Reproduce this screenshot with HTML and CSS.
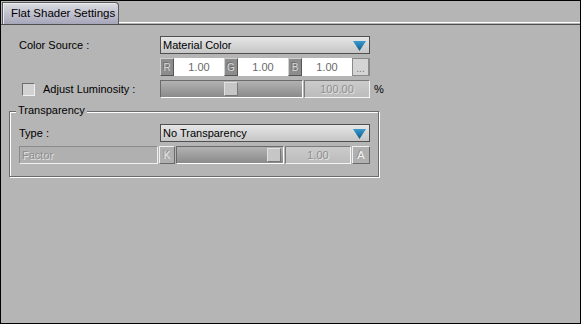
FILE: index.html
```html
<!DOCTYPE html>
<html>
<head>
<meta charset="utf-8">
<link rel="stylesheet" href="styles.css">
</head>
<body>
<div class="window">
  <div class="tabstrip">
    <div class="tab">Flat Shader Settings</div>
    <div class="tabfill"></div>
  </div>
  <div class="content">
    <div class="row first">
      <div class="label">Color Source :</div>
      <div class="dropdown"><span>Material Color</span><svg class="arrow" width="13" height="10" viewBox="0 0 13 10"><defs><linearGradient id="ag" x1="0" y1="0" x2="0" y2="1"><stop offset="0" stop-color="#3a9ad0"/><stop offset="1" stop-color="#0c5a88"/></linearGradient></defs><polygon points="0,0 13,0 6.5,10" fill="url(#ag)"/></svg></div>
    </div>
    <div class="row">
      <div class="label"></div>
      <div class="rgb">
        <span class="chan">R</span><span class="val">1.00</span>
        <span class="chan">G</span><span class="val">1.00</span>
        <span class="chan">B</span><span class="val">1.00</span>
        <span class="dots">...</span>
      </div>
    </div>
    <div class="row">
      <div class="label check-label"><span class="checkbox"></span>Adjust Luminosity :</div>
      <div class="slider lum"><span class="thumb" style="left:63px"></span></div>
      <div class="numbox lumval">100.00</div>
      <span class="pct">%</span>
    </div>
    <div class="group">
      <span class="legend">Transparency</span>
      <div class="row">
        <div class="label">Type :</div>
        <div class="dropdown"><span>No Transparency</span><svg class="arrow" width="13" height="10" viewBox="0 0 13 10"><defs><linearGradient id="ag2" x1="0" y1="0" x2="0" y2="1"><stop offset="0" stop-color="#3a9ad0"/><stop offset="1" stop-color="#0c5a88"/></linearGradient></defs><polygon points="0,0 13,0 6.5,10" fill="url(#ag2)"/></svg></div>
      </div>
      <div class="row factor-row">
        <div class="factor">Factor</div>
        <span class="chan dis">K</span>
        <div class="slider fslider"><span class="thumb" style="left:90px"></span></div>
        <div class="numbox fval">1.00</div>
        <span class="abtn">A</span>
      </div>
    </div>
  </div>
</div>
</body>
</html>
```
FILE: styles.css
```css
* { box-sizing: border-box; }
html, body { margin: 0; padding: 0; }
body {
  font-family: "Liberation Sans", Arial, sans-serif;
  font-size: 11px;
  color: #000;
  background: #b5b5b5;
}
.window {
  width: 581px;
  height: 324px;
  border: 1px solid #000;
  background: #b5b5b5;
}
.tabstrip {
  display: flex;
  height: 24px;
  border-bottom: 1px solid #4e4e4e;
}
.tab {
  margin-top: 1px;
  margin-left: 1px;
  width: 117px;
  height: 22px;
  padding-left: 8px;
  padding-top: 4px;
  border: 1px solid #5a5a5a;
  border-bottom: none;
  border-top-right-radius: 4px;
  background: linear-gradient(#dcdce2, #a6a6ba);
  box-shadow: inset 1px 1px 0 #eeeef2;
  font-size: 11.5px;
}
.tabfill {
  flex: 1;
  height: 22px;
  border-bottom: 1px solid #fff;
}
.content {
  padding: 11px 0 0 8px;
}
.row {
  display: flex;
  align-items: center;
  height: 18px;
  margin-top: 4px;
  padding-left: 10px;
}
.row.first { margin-top: 0; }
.label {
  width: 141px;
  flex: none;
}
.check-label {
  display: flex;
  align-items: center;
}
.checkbox {
  width: 13px;
  height: 13px;
  margin-left: 3px;
  margin-right: 8px;
  background: #d2d2d2;
  border: 1px solid;
  border-color: #6e6e6e #f0f0f0 #f0f0f0 #6e6e6e;
}
.dropdown {
  width: 210px;
  height: 18px;
  border: 1px solid #505050;
  background: linear-gradient(#e6e6e6, #c6c6c6);
  display: flex;
  align-items: center;
  justify-content: space-between;
  padding: 0 2px 0 2px;
}
.arrow { margin-right: 1px; margin-top: 1px; }
.rgb {
  width: 210px;
  height: 18px;
  display: flex;
  background: #fff;
  border-right: 1px solid #888;
}
.chan {
  width: 14px;
  height: 18px;
  flex: none;
  background: #8c8c8c;
  border: 1px solid;
  border-color: #d0d0d0 #555 #555 #d0d0d0;
  color: #d8d8d8;
  font-size: 10px;
  display: flex;
  align-items: center;
  justify-content: center;
  text-shadow: -1px -1px 0 #6a6a6a;
}
.val {
  width: 50px;
  flex: none;
  color: #6a6a6a;
  text-align: center;
  line-height: 18px;
  font-size: 11px;
}
.dots {
  width: 17px;
  flex: none;
  background: #d4d4d4;
  border: 1px solid #8a8a8a;
  color: #777;
  font-size: 10px;
  text-align: center;
  line-height: 20px;
}
.slider {
  position: relative;
  height: 18px;
  flex: none;
  border: 1px solid;
  border-color: #6a6a6a #fff #fff #6a6a6a;
  background: linear-gradient(#b2b2b2, #8a8a8a);
}
.slider.lum { width: 143px; }
.thumb {
  position: absolute;
  top: 1px;
  width: 14px;
  height: 14px;
  background: #c6c6c6;
  border: 1px solid;
  border-color: #e0e0e0 #777 #777 #e0e0e0;
}
.numbox {
  height: 18px;
  flex: none;
  margin-left: 1px;
  border: 1px solid;
  border-color: #7a7a7a #f4f4f4 #f4f4f4 #7a7a7a;
  background: linear-gradient(#cbcbcb, #bcbcbc);
  color: #8e8e8e;
  text-shadow: 1px 1px 0 #e4e4e4;
  text-align: center;
  line-height: 16px;
}
.lumval { width: 66px; }
.pct { margin-left: 4px; }
.group {
  position: relative;
  margin-top: 13px;
  width: 370px;
  height: 66px;
  border: 1px solid #6b6b6b;
  box-shadow: inset 1px 1px 0 #fff, 1px 1px 0 #fff;
  padding: 12px 0 0 0;
}
.group .row { padding-left: 9px; }
.group .row:first-of-type { margin-top: 0; }
.legend {
  position: absolute;
  left: 6px;
  top: -8px;
  padding: 0 2px;
  background: #b5b5b5;
}
.factor {
  width: 139px;
  height: 18px;
  flex: none;
  border: 1px solid;
  border-color: #8a8a8a #f0f0f0 #f0f0f0 #8a8a8a;
  background: #b0b0b0;
  color: #8e8e8e;
  text-shadow: 1px 1px 0 #e4e4e4;
  padding-left: 2px;
  line-height: 16px;
}
.chan.dis {
  margin-left: 1px;
  width: 16px;
  background: #b0b0b0;
  border-color: #f0f0f0 #6a6a6a #6a6a6a #f0f0f0;
  color: #e8e8e8;
  text-shadow: -1px -1px 0 #909090;
}
.fslider { width: 108px; margin-left: 1px; }
.fval { width: 66px; }
.abtn {
  width: 18px;
  height: 18px;
  flex: none;
  margin-left: 1px;
  border: 1px solid;
  border-color: #f0f0f0 #6a6a6a #6a6a6a #f0f0f0;
  background: #b0b0b0;
  color: #f4f4f4;
  text-shadow: -1px -1px 0 #909090;
  display: flex;
  align-items: center;
  justify-content: center;
  font-size: 11px;
}
```
